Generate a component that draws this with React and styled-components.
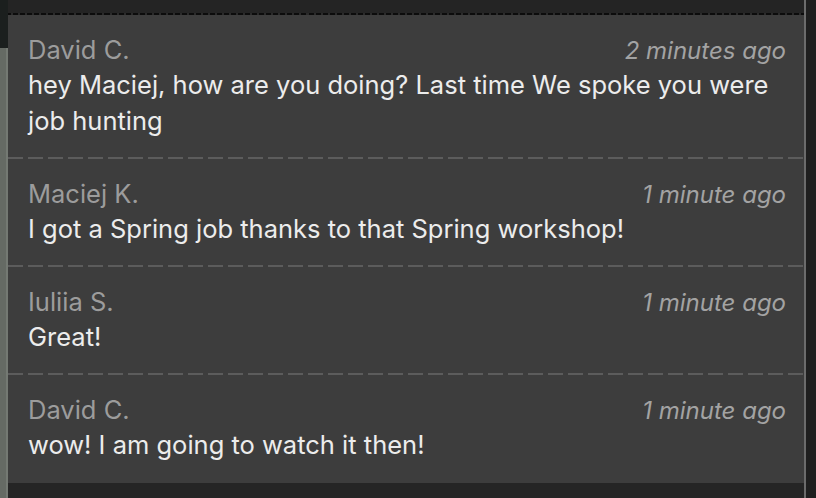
import styled, { createGlobalStyle } from "styled-components";

const GlobalStyle = createGlobalStyle`
    html, body {
        margin: 0;
        padding: 0;
        background: #252525;
    }
    body {
        font-family: Inter, "Noto Sans", "Liberation Sans", sans-serif;
        -webkit-font-smoothing: antialiased;
    }
`;

const messages = [
    { author: "David C.", time: "2 minutes ago", text: "hey Maciej, how are you doing? Last time We spoke you were job hunting" },
    { author: "Maciej K.", time: "1 minute ago", text: "I got a Spring job thanks to that Spring workshop!" },
    { author: "Iuliia S.", time: "1 minute ago", text: "Great!" },
    { author: "David C.", time: "1 minute ago", text: "wow! I am going to watch it then!" },
];

export default function App() {
    return (
        <>
            <GlobalStyle />
            <SPage>
                <SLeftEdge>
                    <SLeftTop />
                    <SLeftBottom />
                </SLeftEdge>
                <SMain>
                    <STopBar />
                    <SPanel>
                        {messages.map((m, i) => (
                            <SMessage key={i} $last={i === messages.length - 1}>
                                <SHead>
                                    <SAuthor>{m.author}</SAuthor>
                                    <STime>{m.time}</STime>
                                </SHead>
                                <SText>{m.text}</SText>
                            </SMessage>
                        ))}
                    </SPanel>
                    <SBottomBar />
                </SMain>
                <SRightEdge />
            </SPage>
        </>
    );
}

const SPage = styled.div`
    display: flex;
    width: 816px;
    height: 498px;
    overflow: hidden;
    background: #252525;
`;
const SLeftEdge = styled.div`
    width: 8px;
    display: flex;
    flex-direction: column;
`;
const SLeftTop = styled.div`
    height: 48px;
    background: #1b1f1e;
`;
const SLeftBottom = styled.div`
    flex: 1;
    background: #656a64;
    border-right: 2px solid #747973;
`;
const SMain = styled.div`
    width: 796px;
    display: flex;
    flex-direction: column;
`;
const STopBar = styled.div`
    height: 13px;
    background: #242424;
    border-bottom: 2px solid transparent;
    border-image: repeating-linear-gradient(to right, #0c0c0c 0 5px, #2a2a2a 5px 7px) 2;
`;
const SPanel = styled.div`
    height: 468px;
    background: #3d3d3d;
`;
const SMessage = styled.div`
    padding: 18px 18px 20px 20px;
    background-image: ${(p) =>
        p.$last ? "none" : "repeating-linear-gradient(to right, #5c5c5c 0 15px, transparent 15px 20px)"};
    background-size: 100% 2px;
    background-position: bottom left;
    background-repeat: no-repeat;
`;
const SHead = styled.div`
    display: flex;
    justify-content: space-between;
    align-items: baseline;
    height: 34px;
    line-height: 34px;
`;
const SAuthor = styled.span`
    font-size: 25.5px;
    color: #9c9c9c;
`;
const STime = styled.span`
    font-size: 24px;
    font-style: italic;
    color: #a3a3a3;
`;
const SText = styled.div`
    font-size: 25.5px;
    line-height: 36px;
    color: #ececec;
    padding-right: 4px;
`;
const SBottomBar = styled.div`
    flex: 1;
    background: #252525;
`;
const SRightEdge = styled.div`
    flex: 1;
    background: #1f1f1f;
    border-left: 2px solid #6c6c6c;
`;
